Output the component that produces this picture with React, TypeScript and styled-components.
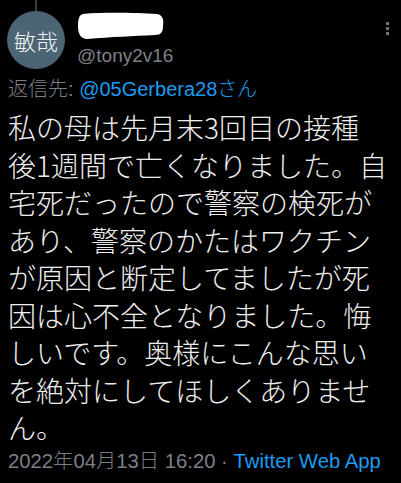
import React from "react";
import styled, { createGlobalStyle } from "styled-components";

const GlobalStyle = createGlobalStyle`
  html, body {
    margin: 0;
    padding: 0;
    background: #000;
  }
  body {
    font-family: "Liberation Sans", "Noto Sans CJK JP", sans-serif;
    color: #e7e9ea;
  }
`;

const lines = [
  "私の母は先月末3回目の接種",
  "後1週間で亡くなりました。自",
  "宅死だったので警察の検死が",
  "あり、警察のかたはワクチン",
  "が原因と断定してましたが死",
  "因は心不全となりました。悔",
  "しいです。奥様にこんな思い",
  "を絶対にしてほしくありませ",
  "ん。",
];

const App = () => {
  return (
    <>
      <GlobalStyle />
      <Tweet>
        <Header>
          <AvatarCol>
            <ThreadLine />
            <Avatar>敏哉</Avatar>
          </AvatarCol>
          <NameCol>
            <NameBlob width="88" height="28" viewBox="0 0 88 28">
              <path
                d="M6 2 C30 0 60 1 80 2 C86 3 87 8 86 14 C86 20 84 23 78 23 C55 24 35 25 10 27 C4 27 1 22 1 15 C1 7 2 3 6 2 Z"
                fill="#fff"
              />
            </NameBlob>
            <Handle>@tony2v16</Handle>
          </NameCol>
          <MenuDots>
            <Dot />
            <Dot />
            <Dot />
          </MenuDots>
        </Header>
        <ReplyTo>
          返信先: <Link>@05Gerbera28さん</Link>
        </ReplyTo>
        <Body>
          {lines.map((l) => (
            <Line key={l}>{l}</Line>
          ))}
        </Body>
        <Meta>
          2022年04月13日 16:20 · <Link>Twitter Web App</Link>
        </Meta>
      </Tweet>
    </>
  );
};

export default App;

const Tweet = styled.div`
  width: 401px;
  height: 483px;
  overflow: hidden;
  padding: 0 0 0 8px;
  box-sizing: border-box;
`;

const Header = styled.div`
  display: flex;
  align-items: flex-start;
`;

const AvatarCol = styled.div`
  display: flex;
  flex-direction: column;
  align-items: center;
  width: 58px;
  margin-left: -1px;
`;

const ThreadLine = styled.div`
  width: 2px;
  height: 11px;
  background: #3a3d40;
`;

const Avatar = styled.div`
  width: 58px;
  height: 58px;
  border-radius: 50%;
  background: #4c6575;
  color: #f2f4f5;
  font-family: "Noto Sans CJK JP", sans-serif;
  font-weight: 300;
  font-size: 22px;
  display: flex;
  align-items: center;
  justify-content: center;
`;

const NameCol = styled.div`
  display: flex;
  flex-direction: column;
  margin-left: 12px;
  padding-top: 12px;
`;

const NameBlob = styled.svg`
  display: block;
`;

const Handle = styled.div`
  margin-top: 5px;
  font-size: 19px;
  line-height: 22px;
  color: #7b8085;
`;

const MenuDots = styled.div`
  margin-left: auto;
  margin-right: 12px;
  padding-top: 22px;
  display: flex;
  flex-direction: column;
  gap: 2px;
`;

const Dot = styled.div`
  width: 3px;
  height: 3px;
  background: #6f7378;
`;

const ReplyTo = styled.div`
  margin-top: 9px;
  font-size: 20px;
  line-height: 22px;
  color: #7b8085;
  font-weight: 300;
`;

const Link = styled.span`
  color: #1d9bf0;
`;

const Body = styled.div`
  margin-top: 9px;
  font-family: "Noto Sans CJK JP", sans-serif;
  font-size: 28px;
  line-height: 37.5px;
  font-weight: 300;
  color: #eeeeee;
`;

const Line = styled.div`
  white-space: nowrap;
`;

const Meta = styled.div`
  margin-top: 2px;
  font-size: 20.3px;
  line-height: 24px;
  color: #7b8085;
  font-weight: 300;
  white-space: nowrap;
`;
